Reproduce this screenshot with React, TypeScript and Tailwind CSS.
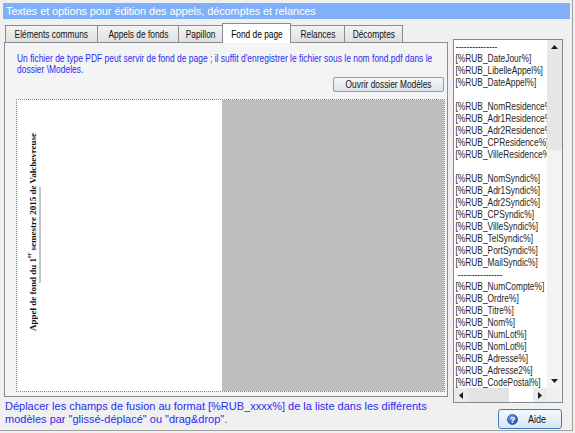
import React from "react";

const tabs = [
  { label: "Eléments communs", w: "w-[93px]" },
  { label: "Appels de fonds", w: "w-[82px]" },
  { label: "Papillon", w: "w-[45px]" },
  { label: "Fond de page", w: "w-[69px]", active: true },
  { label: "Relances", w: "w-[55px]" },
  { label: "Décomptes", w: "w-[59px]" },
];

const fields = [
  "---------------",
  "[%RUB_DateJour%]",
  "[%RUB_LibelleAppel%]",
  "[%RUB_DateAppel%]",
  "",
  "[%RUB_NomResidence%]",
  "[%RUB_Adr1Residence%]",
  "[%RUB_Adr2Residence%]",
  "[%RUB_CPResidence%]",
  "[%RUB_VilleResidence%]",
  "",
  "[%RUB_NomSyndic%]",
  "[%RUB_Adr1Syndic%]",
  "[%RUB_Adr2Syndic%]",
  "[%RUB_CPSyndic%]",
  "[%RUB_VilleSyndic%]",
  "[%RUB_TelSyndic%]",
  "[%RUB_PortSyndic%]",
  "[%RUB_MailSyndic%]",
  " ----------------",
  "[%RUB_NumCompte%]",
  "[%RUB_Ordre%]",
  "[%RUB_Titre%]",
  "[%RUB_Nom%]",
  "[%RUB_NumLot%]",
  "[%RUB_NomLot%]",
  "[%RUB_Adresse%]",
  "[%RUB_Adresse2%]",
  "[%RUB_CodePostal%]",
];

function Arrow({ dir }: { dir: "up" | "down" | "left" | "right" }) {
  const pts = {
    up: "0,4 3.5,0 7,4",
    down: "0,0 3.5,4 7,0",
    left: "4,0 0,3.5 4,7",
    right: "0,0 4,3.5 0,7",
  }[dir];
  const vertical = dir === "up" || dir === "down";
  return (
    <svg width={vertical ? 7 : 4} height={vertical ? 4 : 7} viewBox={vertical ? "0 0 7 4" : "0 0 4 7"}>
      <polygon points={pts} fill="#1e1e1e" />
    </svg>
  );
}

function HelpIcon() {
  return (
    <svg width="11" height="11" viewBox="0 0 11 11">
      <defs>
        <radialGradient id="help" cx="40%" cy="35%" r="70%">
          <stop offset="0" stopColor="#7aa8ec" />
          <stop offset="1" stopColor="#1b47a4" />
        </radialGradient>
      </defs>
      <circle cx="5.5" cy="5.5" r="5.1" fill="url(#help)" stroke="#173f8c" strokeWidth="0.6" />
      <text x="5.5" y="8.6" textAnchor="middle" fontSize="8.5" fontWeight="bold" fill="#fff" fontFamily="Liberation Sans, Arial, sans-serif">
        ?
      </text>
    </svg>
  );
}

export default function App() {
  return (
    <div className="w-[575px] h-[433px] overflow-hidden bg-[#f0f0f0] font-['Liberation_Sans',Arial,sans-serif] text-black">
      <div className="w-[573px] h-[431px] border-r border-b border-[#a0a0a0] pt-[3px] pl-[3px] pr-[2px] flex flex-col">
        {/* Title */}
        <div className="h-[16px] bg-[#80b0f7] text-white text-[11px] leading-[16px] pl-[3px] tracking-[-0.1px] whitespace-nowrap">
          Textes et options pour édition des appels, décomptes et relances
        </div>

        <div className="flex pl-px">
          {/* Left column */}
          <div className="w-[444px] flex flex-col">
            <div className="mt-[4px] h-[19px] flex items-end pl-px">
              {tabs.map((t, i) => (
                <div
                  key={t.label}
                  className={
                    t.active
                      ? `${t.w} h-[20px] -mb-px -ml-px relative z-10 bg-white border border-b-0 border-[#898c95] flex items-center justify-center text-[11px] leading-[12px]`
                      : `${t.w} h-[17px] ${i === 0 ? "" : "-ml-px"} bg-linear-to-b from-[#f3f3f3] to-[#e0e0e0] border border-b-0 border-[#898c95] flex items-center justify-center text-[11px] leading-[12px] text-[#111]`
                  }
                >
                  <span className="inline-block whitespace-nowrap scale-x-[0.76]">{t.label}</span>
                </div>
              ))}
            </div>

            <div className="h-[355px] border border-[#898c95] bg-[#f4f4f4] flex flex-col">
              <div className="pl-[12px] pt-[10px] text-[11px] leading-[11px] text-[#2b2bf5]">
                <span className="block origin-left scale-x-[0.77] whitespace-nowrap">
                  Un fichier de type PDF peut servir de fond de page ; il suffit d'enregistrer le fichier sous le nom fond.pdf dans le
                </span>
                <span className="block origin-left scale-x-[0.77] whitespace-nowrap">dossier \Modeles.</span>
              </div>

              <button className="self-end mr-[3px] mt-[2px] w-[111px] h-[15px] border border-[#8c9bb0] rounded-[2px] bg-linear-to-b from-[#f6f8fb] to-[#dbe3ec] flex items-center justify-center text-[11px] leading-none text-[#111]">
                <span className="inline-block whitespace-nowrap scale-x-[0.76]">Ouvrir dossier Modèles</span>
              </button>

              <div className="mt-[7px] ml-[11px] mr-[2px] mb-[4px] flex-1 border border-dotted border-[#8a8a8a] flex">
                <div className="w-[205px] bg-white flex items-start pl-[11px] pt-[33px]">
                  <span className="[writing-mode:vertical-rl] rotate-180 font-['Liberation_Serif',serif] font-bold text-[9px] leading-[10px] whitespace-nowrap text-[#111]">
                    Appel de fond du 1<sup className="top-0 align-super text-[6px]">er</sup> semestre 2015 de Valchevreuse
                  </span>
                  <div className="ml-px mt-[54px] w-[2px] h-[96px] bg-[#c4c4c4]" />
                </div>
                <div className="flex-1 bg-[#bfbebe]" />
              </div>
            </div>

            <p className="pl-px mt-[3px] text-[11px] leading-[13px] text-[#2b2bf5] whitespace-nowrap">
              Déplacer les champs de fusion au format [%RUB_xxxx%] de la liste dans les différents
              <br />
              {'modèles par "glissé-déplacé" ou "drag&drop".'}
            </p>
          </div>

          {/* Right column */}
          <div className="ml-[5px] w-[110px] pt-[20px] flex flex-col">
            <div className="h-[364px] border border-[#828790] bg-white flex flex-col">
              <div className="flex-1 flex min-h-0">
                <div className="w-[93px] overflow-hidden text-[11px] leading-[12px] text-[#1e1e1e]">
                  {fields.map((f, i) => (
                    <div key={i} className="h-[12px] pl-[2px] origin-left scale-x-[0.76] whitespace-pre">
                      {f}
                    </div>
                  ))}
                </div>
                <div className="w-[15px] flex flex-col bg-[#f3f3f3]">
                  <div className="h-[14px] bg-[#e8e8e8] flex items-center justify-center">
                    <Arrow dir="up" />
                  </div>
                  <div className="h-[96px] bg-[#e6e6e6]" />
                  <div className="flex-1" />
                  <div className="h-[14px] flex items-center justify-center">
                    <Arrow dir="down" />
                  </div>
                </div>
              </div>
              <div className="h-[14px] flex">
                <div className="w-[14px] bg-[#ebebeb] flex items-center justify-center">
                  <Arrow dir="left" />
                </div>
                <div className="w-[41px] bg-[#e4e4e4]" />
                <div className="flex-1 bg-white" />
                <div className="w-[14px] bg-[#ebebeb] flex items-center justify-center">
                  <Arrow dir="right" />
                </div>
                <div className="w-[15px] bg-[#f0f0f0]" />
              </div>
            </div>

            <button className="mt-[6px] self-end mr-px w-[64px] h-[20px] border border-[#3c7fc4] rounded-[3px] bg-linear-to-b from-[#f4f9fe] to-[#d7e6f5] flex items-center pl-[8px] text-[11px] leading-none text-[#111]">
              <HelpIcon />
              <span className="ml-[10px] inline-block origin-left scale-x-[0.82]">Aide</span>
            </button>
          </div>
        </div>
      </div>
    </div>
  );
}
